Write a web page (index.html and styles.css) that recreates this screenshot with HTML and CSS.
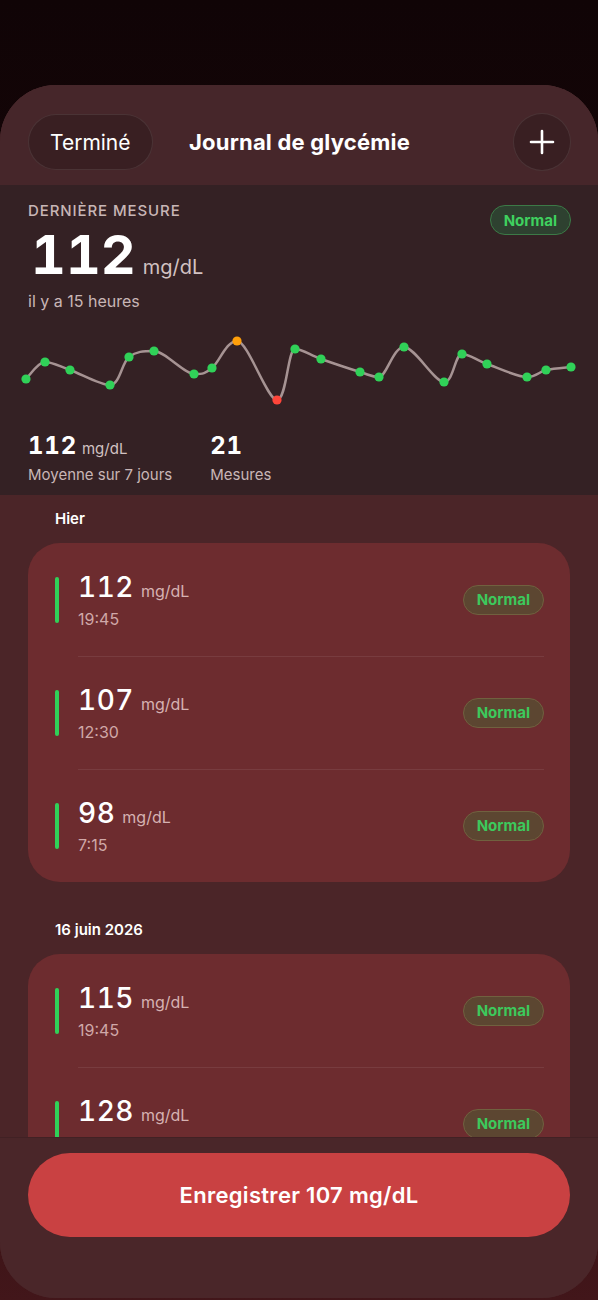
FILE: index.html
```html
<!DOCTYPE html>
<html lang="fr">
<head>
<meta charset="utf-8">
<title>Journal de glycémie</title>
<link rel="stylesheet" href="styles.css">
</head>
<body>
<div class="sheet">
  <header class="topbar">
    <button class="pill">Terminé</button>
    <h1 class="title">Journal de glycémie</h1>
    <button class="round" aria-label="Ajouter">
      <svg width="26" height="26" viewBox="0 0 26 26"><path d="M13 2v22M2 13h22" stroke="#fff" stroke-width="2.6" stroke-linecap="round" fill="none"/></svg>
    </button>
  </header>

  <section class="summary">
    <div class="summary-top">
      <div class="last">
        <div class="eyebrow">DERNIÈRE MESURE</div>
        <div class="big"><span class="big-num">112</span><span class="big-unit">mg/dL</span></div>
        <div class="ago">il y a 15 heures</div>
      </div>
      <span class="badge badge-top">Normal</span>
    </div>
    <svg class="chart" width="598" height="100" viewBox="0 320 598 100">
      <path d="M26,379 C29.2,376.2 37.7,362 45,362 C52.3,362 59.2,366.2 70,370 C80.8,373.8 100.2,385 110,385 C119.8,385 121.7,362.7 129,357 C136.3,351.3 143.2,351 154,351 C164.8,351 184.3,374 194,374 C203.7,374 204.8,373.5 212,368 C219.2,362.5 226.2,341 237,341 C247.8,341 267.3,400 277,400 C286.7,400 287.7,349 295,349 C302.3,349 310.2,355.2 321,359 C331.8,362.8 350.3,369 360,372 C369.7,375 371.7,377 379,377 C386.3,377 393.2,347 404,347 C414.8,347 434.3,382 444,382 C453.7,382 454.8,354 462,354 C469.2,354 476.2,360.2 487,364 C497.8,367.8 517.2,377 527,377 C536.8,377 538.7,371.7 546,370 C553.3,368.3 566.8,367.5 571,367" fill="none" stroke="#a69393" stroke-width="2.5" stroke-linecap="round"/>
      <g fill="#30d158">
        <circle cx="26" cy="379" r="4.6"/>
        <circle cx="45" cy="362" r="4.6"/>
        <circle cx="70" cy="370" r="4.6"/>
        <circle cx="110" cy="385" r="4.6"/>
        <circle cx="129" cy="357" r="4.6"/>
        <circle cx="154" cy="351" r="4.6"/>
        <circle cx="194" cy="374" r="4.6"/>
        <circle cx="212" cy="368" r="4.6"/>
        <circle cx="295" cy="349" r="4.6"/>
        <circle cx="321" cy="359" r="4.6"/>
        <circle cx="360" cy="372" r="4.6"/>
        <circle cx="379" cy="377" r="4.6"/>
        <circle cx="404" cy="347" r="4.6"/>
        <circle cx="444" cy="382" r="4.6"/>
        <circle cx="462" cy="354" r="4.6"/>
        <circle cx="487" cy="364" r="4.6"/>
        <circle cx="527" cy="377" r="4.6"/>
        <circle cx="546" cy="370" r="4.6"/>
        <circle cx="571" cy="367" r="4.6"/>
      </g>
      <circle cx="237" cy="341" r="4.6" fill="#ff9f0a"/>
      <circle cx="277" cy="400" r="4.6" fill="#ff453a"/>
    </svg>
    <div class="stats">
      <div class="stat">
        <div class="stat-val"><span class="stat-num">112</span><span class="stat-unit">mg/dL</span></div>
        <div class="stat-label">Moyenne sur 7 jours</div>
      </div>
      <div class="stat">
        <div class="stat-val"><span class="stat-num">21</span></div>
        <div class="stat-label">Mesures</div>
      </div>
    </div>
  </section>

  <main class="list">
    <h2 class="day">Hier</h2>
    <div class="card">
      <div class="row">
        <span class="bar"></span>
        <div class="reading"><div class="val"><span class="num">112</span><span class="unit">mg/dL</span></div><div class="time">19:45</div></div>
        <span class="badge">Normal</span>
      </div>
      <div class="row">
        <span class="bar"></span>
        <div class="reading"><div class="val"><span class="num">107</span><span class="unit">mg/dL</span></div><div class="time">12:30</div></div>
        <span class="badge">Normal</span>
      </div>
      <div class="row">
        <span class="bar"></span>
        <div class="reading"><div class="val"><span class="num">98</span><span class="unit">mg/dL</span></div><div class="time">7:15</div></div>
        <span class="badge">Normal</span>
      </div>
    </div>

    <h2 class="day day-gap">16 juin 2026</h2>
    <div class="card">
      <div class="row">
        <span class="bar"></span>
        <div class="reading"><div class="val"><span class="num">115</span><span class="unit">mg/dL</span></div><div class="time">19:45</div></div>
        <span class="badge">Normal</span>
      </div>
      <div class="row">
        <span class="bar"></span>
        <div class="reading"><div class="val"><span class="num">128</span><span class="unit">mg/dL</span></div><div class="time">12:10</div></div>
        <span class="badge">Normal</span>
      </div>
      <div class="row">
        <span class="bar"></span>
        <div class="reading"><div class="val"><span class="num">104</span><span class="unit">mg/dL</span></div><div class="time">7:30</div></div>
        <span class="badge">Normal</span>
      </div>
    </div>
  </main>

  <footer class="footer">
    <button class="save">Enregistrer 107 mg/dL</button>
  </footer>
</div>
</body>
</html>
```

FILE: styles.css
```css
* { box-sizing: border-box; }

html, body {
  margin: 0;
  padding: 0;
}

body {
  width: 598px;
  height: 1300px;
  overflow: hidden;
  background: linear-gradient(180deg, #100406 0%, #1c0709 40%, #33100f 80%, #42161a 100%);
  font-family: Inter, "Noto Sans", "Liberation Sans", sans-serif;
  color: #fff;
  padding-top: 85px;
}

button {
  font-family: inherit;
  color: inherit;
  border: none;
  cursor: pointer;
}

.sheet {
  height: 1213px;
  background: #4a2629;
  border-radius: 56px;
  overflow: hidden;
  display: flex;
  flex-direction: column;
  box-shadow: inset 0 1px 0 rgba(255, 255, 255, 0.06);
}

/* Header */
.topbar {
  height: 100px;
  flex: none;
  background: #46262a;
  display: grid;
  grid-template-columns: 1fr auto 1fr;
  align-items: center;
  padding: 28px 27px 16px 28px;
}

.pill {
  justify-self: start;
  height: 56px;
  padding: 0 21px;
  border-radius: 28px;
  background: #391f22;
  border: 1px solid rgba(255, 255, 255, 0.09);
  font-size: 21px;
  font-weight: 400;
  letter-spacing: 0;
}

.title {
  margin: 0;
  font-size: 22px;
  font-weight: 700;
  letter-spacing: 0.2px;
}

.round {
  justify-self: end;
  width: 58px;
  height: 58px;
  border-radius: 50%;
  background: #391f22;
  border: 1px solid rgba(255, 255, 255, 0.09);
  display: flex;
  align-items: center;
  justify-content: center;
  padding: 0;
}

/* Summary */
.summary {
  flex: none;
  height: 310px;
  background: #342124;
  display: flex;
  flex-direction: column;
}

.summary-top {
  display: flex;
  justify-content: space-between;
  align-items: flex-start;
  padding: 16px 27px 0 28px;
}

.eyebrow {
  font-size: 15px;
  line-height: 20px;
  font-weight: 500;
  color: #c8b6b6;
  letter-spacing: 0.9px;
}

.big {
  margin-top: 6px;
  height: 56px;
  display: flex;
  align-items: baseline;
  gap: 7px;
}

.big-num {
  font-size: 54px;
  line-height: 56px;
  font-weight: 700;
  font-variant-numeric: tabular-nums;
  letter-spacing: 0;
  padding-left: 3px;
}

.big-unit {
  font-size: 20px;
  color: #d2c2c2;
}

.ago {
  margin-top: 8px;
  font-size: 16px;
  line-height: 20px;
  color: #c8b6b6;
}

.badge {
  flex: none;
  height: 30px;
  padding: 0 13px;
  border-radius: 15px;
  display: inline-flex;
  align-items: center;
  font-size: 15px;
  font-weight: 700;
  color: #3cc95c;
  background: #5c4631;
  border: 1px solid #70613f;
}

.badge-top {
  margin-top: 4px;
  background: #2e4130;
  border-color: #3c7a47;
  color: #3fd15f;
}

.chart {
  display: block;
  margin-top: 9px;
}

.stats {
  display: flex;
  gap: 38px;
  padding: 12px 28px 0 28px;
}

.stat-val {
  height: 28px;
  display: flex;
  align-items: baseline;
  gap: 5px;
}

.stat-num {
  font-size: 24px;
  line-height: 28px;
  font-weight: 700;
  font-variant-numeric: tabular-nums;
  letter-spacing: 0.8px;
}

.stat-unit {
  font-size: 15px;
  color: #d2c2c2;
}

.stat-label {
  margin-top: 5px;
  font-size: 15px;
  line-height: 20px;
  color: #c8b6b6;
}

/* List */
.list {
  flex: 1;
  min-height: 0;
  overflow: hidden;
  background: #4b2528;
  padding: 14px 28px 0 28px;
}

.day {
  margin: 0 0 14px 27px;
  font-size: 15px;
  line-height: 20px;
  font-weight: 600;
}

.day-gap {
  margin-top: 38px;
}

.card {
  background: #6d2c2f;
  border-radius: 32px;
  overflow: hidden;
}

.row {
  height: 113px;
  display: flex;
  align-items: center;
  padding: 0 26px 0 27px;
  position: relative;
}

.row + .row::before {
  content: "";
  position: absolute;
  top: 0;
  left: 50px;
  right: 26px;
  height: 1px;
  background: rgba(255, 255, 255, 0.08);
}

.bar {
  flex: none;
  width: 4px;
  height: 46px;
  border-radius: 2px;
  background: #30d158;
}

.reading {
  flex: 1;
  margin-left: 19px;
}

.val {
  display: flex;
  align-items: baseline;
  gap: 7px;
  height: 32px;
}

.num {
  font-size: 28px;
  line-height: 32px;
  font-weight: 500;
  font-variant-numeric: tabular-nums;
  letter-spacing: 0.5px;
}

.unit {
  font-size: 16px;
  color: #d6b2b2;
}

.time {
  margin-top: 6px;
  font-size: 16px;
  line-height: 20px;
  color: #d0a8a8;
}

/* Footer */
.footer {
  flex: none;
  height: 161px;
  background: #4a2629;
  border-top: 1px solid rgba(0, 0, 0, 0.12);
  padding: 15px 28px 0 28px;
}

.save {
  width: 100%;
  height: 84px;
  border-radius: 42px;
  background: #c94142;
  font-size: 22px;
  font-weight: 600;
  letter-spacing: 0.3px;
}
```
